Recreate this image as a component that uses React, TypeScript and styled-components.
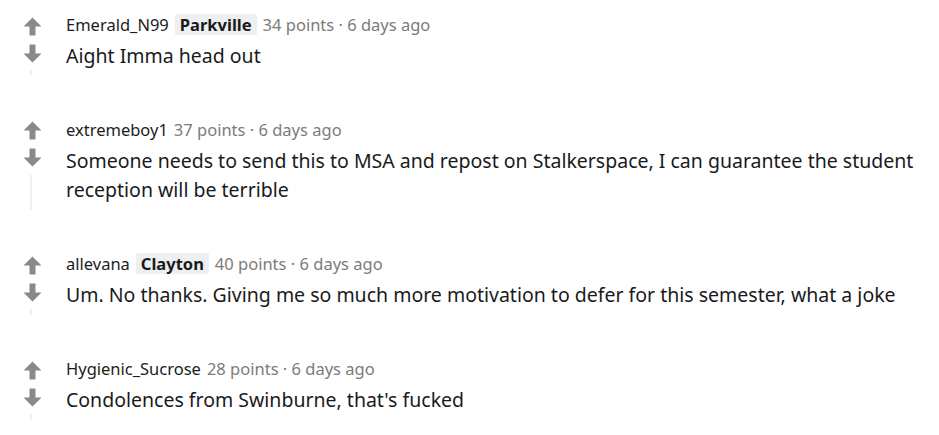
import React from "react";
import styled, { createGlobalStyle } from "styled-components";

const Global = createGlobalStyle`
  html, body { margin: 0; padding: 0; background: #ffffff; }
  body { font-family: "Noto Sans", "DejaVu Sans", sans-serif; }
`;

const List = styled.div`
  display: flex;
  flex-direction: column;
  gap: 43.5px;
  padding: 14px 16px 0 20px;
`;

const Comment = styled.div`
  display: flex;
  align-items: stretch;
`;

const VoteCol = styled.div`
  width: 24px;
  flex: 0 0 24px;
  display: flex;
  flex-direction: column;
  align-items: center;
  margin-right: 22px;
  padding-top: 2px;
`;

const VoteButton = styled.div<{ $down?: boolean }>`
  width: 20px;
  height: 20px;
  margin-top: ${(p) => (p.$down ? "7px" : "0")};
  color: #878a8c;
  display: flex;
  align-items: center;
  justify-content: center;
  svg { display: block; transform: ${(p) => (p.$down ? "rotate(180deg)" : "none")}; }
`;

const ThreadLine = styled.div`
  flex: 1;
  width: 2px;
  margin-top: 7px;
  margin-right: 3px;
  background: #edeff1;
`;

const Content = styled.div`
  flex: 1;
  min-width: 0;
  padding-bottom: 5px;
`;

const Meta = styled.div`
  display: flex;
  align-items: center;
  gap: 6px;
  height: 21px;
  font-size: 16.5px;
  line-height: 21px;
  white-space: nowrap;
`;

const Author = styled.span`
  color: #1c1c1c;
`;

const Flair = styled.span`
  background: #edeff1;
  color: #1a1a1b;
  font-weight: 700;
  padding: 0 5px;
  height: 21px;
  line-height: 21px;
  border-radius: 2px;
`;

const Score = styled.span`
  color: #7c7c7c;
`;

const Body = styled.p`
  margin: 6px 0 0;
  font-size: 19.5px;
  line-height: 29.4px;
  color: #1a1a1b;
`;

const Arrow = () => (
  <svg width="19" height="19" viewBox="0 0 19 19" aria-hidden="true">
    <path d="M9.5 0.5 L18.5 9.5 H12.5 V18.5 H6.5 V9.5 H0.5 Z" fill="currentColor" />
  </svg>
);

type Item = { author: string; flair?: string; points: number; age: string; body: string };

const items: Item[] = [
  { author: "Emerald_N99", flair: "Parkville", points: 34, age: "6 days ago", body: "Aight Imma head out" },
  {
    author: "extremeboy1",
    points: 37,
    age: "6 days ago",
    body: "Someone needs to send this to MSA and repost on Stalkerspace, I can guarantee the student reception will be terrible",
  },
  {
    author: "allevana",
    flair: "Clayton",
    points: 40,
    age: "6 days ago",
    body: "Um. No thanks. Giving me so much more motivation to defer for this semester, what a joke",
  },
  { author: "Hygienic_Sucrose", points: 28, age: "6 days ago", body: "Condolences from Swinburne, that's fucked" },
];

export default function App() {
  return (
    <>
      <Global />
      <List>
        {items.map((c) => (
          <Comment key={c.author}>
            <VoteCol>
              <VoteButton>
                <Arrow />
              </VoteButton>
              <VoteButton $down>
                <Arrow />
              </VoteButton>
              <ThreadLine />
            </VoteCol>
            <Content>
              <Meta>
                <Author>{c.author}</Author>
                {c.flair && <Flair>{c.flair}</Flair>}
                <Score>
                  {c.points} points · {c.age}
                </Score>
              </Meta>
              <Body>{c.body}</Body>
            </Content>
          </Comment>
        ))}
      </List>
    </>
  );
}
